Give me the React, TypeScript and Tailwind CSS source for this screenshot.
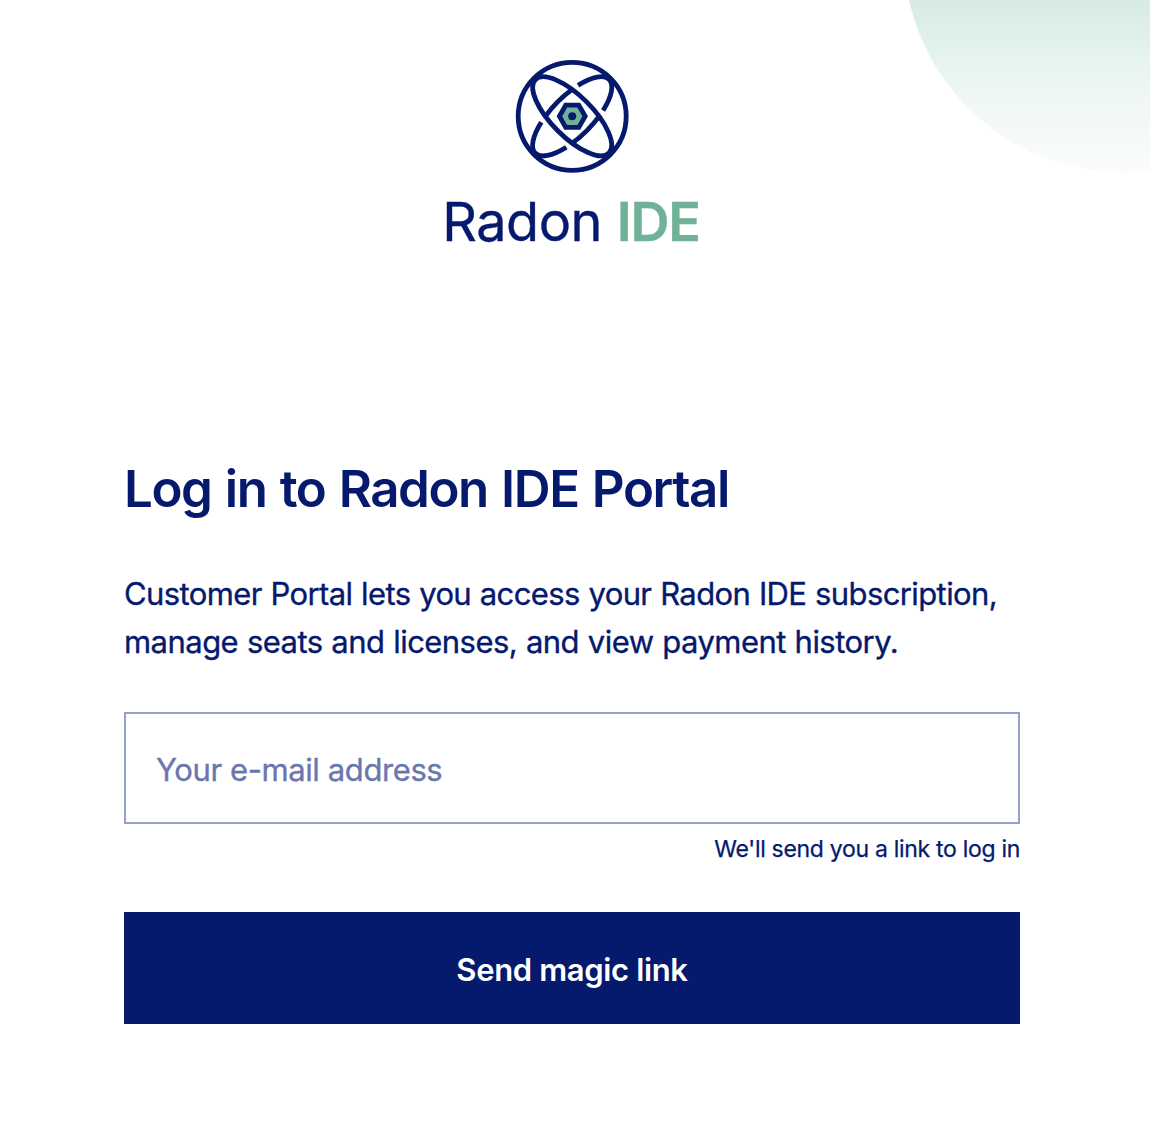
import React from "react";

function Emblem() {
  return (
    <svg width="114" height="114" viewBox="0 0 114 114" fill="none" stroke="#05196d" strokeWidth="4.8">
      <circle cx="57.2" cy="57.3" r="54" />
      <ellipse rx="52" ry="20.4" transform="translate(57.2 57.3) rotate(45)" />
      <g transform="translate(57.2 57.3) rotate(-45)">
        <path d="M26 -17.7A52 20.4 0 0 1 26 17.7" />
        <path d="M-26 -17.7A52 20.4 0 0 0 -26 17.7" />
        <path d="M-19 -19A52 20.4 0 0 1 19 -19" />
        <path d="M-19 19A52 20.4 0 0 0 19 19" />
      </g>
      <path d="M50.7 46.2H63.8L70.2 57.3L63.8 68.4H50.7L44.4 57.3Z" fill="#6fb297" />
      <circle cx="57.2" cy="57.3" r="4" fill="#05196d" stroke="none" />
    </svg>
  );
}

export default function App() {
  return (
    <main className="relative h-[1142px] w-[1150px] overflow-hidden bg-white pt-[59px] pr-[130px] pl-[124px] font-['Inter',sans-serif] text-[#05196d]">
      <div className="absolute -top-[266px] left-[904px] size-[438px] rounded-full bg-[linear-gradient(180deg,#a5d3c3_0%,#d7ebe4_61%,#e8f4f0_76%,#f2f8f6_86%,#fafcfc_100%)]" />
      <header className="flex h-[400px] flex-col items-center">
        <Emblem />
        <div className="mt-[13px] mr-[2px] text-[54px] leading-[72px] tracking-[-0.5px] whitespace-nowrap [-webkit-text-stroke:0.4px]">
          Radon <span className="font-semibold tracking-[-1.2px] text-[#6fb297]">IDE</span>
        </div>
      </header>
      <h1 className="text-[51px] leading-[60px] font-semibold tracking-[-1.45px] whitespace-nowrap [word-spacing:1.9px]">Log in to Radon IDE Portal</h1>
      <p className="mt-[51px] text-[31px] leading-[48px] whitespace-nowrap [-webkit-text-stroke:0.35px]">
        <span className="tracking-[-0.61px] [word-spacing:0.6px]">Customer Portal lets you access your Radon IDE subscription,</span>
        <br />
        <span className="tracking-[-0.54px] [word-spacing:0.6px]">manage seats and licenses, and view payment history.</span>
      </p>
      <input
        className="mt-[46px] h-[112px] w-full border-2 border-[#949fcb] px-[30px] pt-[2px] text-[31px] tracking-[-0.4px] [-webkit-text-stroke:0.35px] placeholder:text-[#6a77ae]"
        placeholder="Your e-mail address"
      />
      <div className="mt-[7px] text-right text-[23px] leading-[36px] tracking-[-0.3px] [-webkit-text-stroke:0.25px]">We'll send you a link to log in</div>
      <button className="mt-[45px] h-[112px] w-full bg-[#05196d] pt-[4px] text-[31px] font-semibold tracking-[-0.35px] text-white">Send magic link</button>
    </main>
  );
}
